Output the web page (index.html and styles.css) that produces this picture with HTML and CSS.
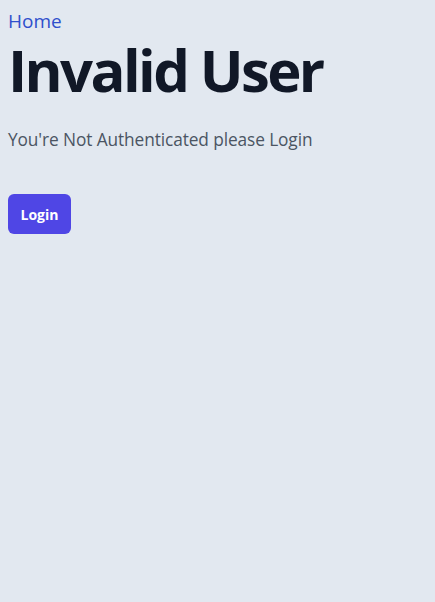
FILE: index.html
```html
<!doctype html>
<html lang="en">
  <head>
    <meta charset="UTF-8" />
    <meta name="viewport" content="width=device-width, initial-scale=1.0" />
    <title>Invalid User</title>
    <link rel="stylesheet" href="styles.css">
  </head>
  <body>
    <div class="page">
      <a class="home" href="#">Home</a>
      <h1 class="title">Invalid User</h1>
      <p class="message">You're Not Authenticated please Login</p>
      <button class="login">Login</button>
    </div>
  </body>
</html>
```

FILE: styles.css
```css
body {
  margin: 0;
  background-color: #e2e8f0;
  font-family: "Open Sans", "Noto Sans", sans-serif;
  min-height: 100vh;
}

.page {
  padding: 8px;
}

.home {
  display: block;
  color: #2f4fcc;
  font-size: 19px;
  line-height: 26px;
  text-decoration: none;
}

.title {
  margin: 4px 0 0;
  color: #111827;
  font-size: 58px;
  font-weight: 700;
  line-height: 64px;
  letter-spacing: -2.6px;
}

.message {
  margin: 24px 0 0;
  color: #4b5563;
  font-size: 17.3px;
  line-height: 28px;
  letter-spacing: -0.1px;
}

.login {
  margin-top: 40px;
  width: 63px;
  height: 40px;
  border: none;
  border-radius: 6px;
  background-color: #4f46e5;
  color: white;
  font-family: inherit;
  font-size: 14px;
  font-weight: 700;
  cursor: pointer;
}
```
